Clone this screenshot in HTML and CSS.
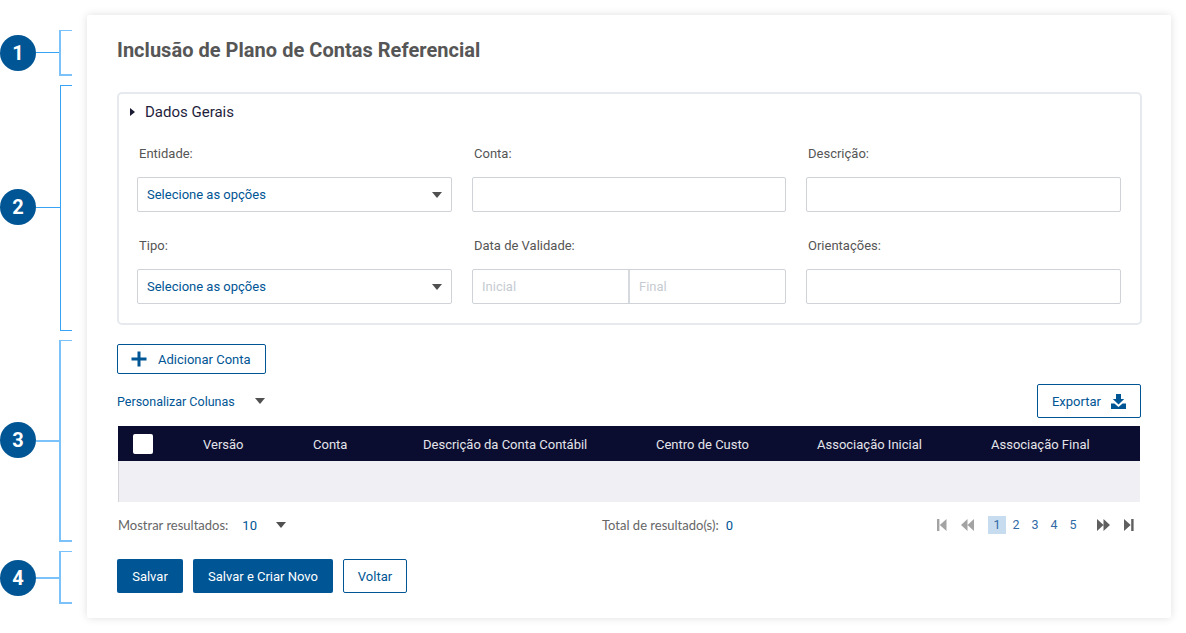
FILE: index.html
```html
<!DOCTYPE html>
<html lang="pt-BR">
<head>
<meta charset="utf-8">
<title>Inclusão de Plano de Contas Referencial</title>
<link rel="stylesheet" href="styles.css">
</head>
<body>
<div class="page">
  <div class="note note-1"><span class="badge">1</span><span class="stem"></span><span class="bracket"></span></div>
  <div class="note note-2"><span class="badge">2</span><span class="stem"></span><span class="bracket"></span></div>
  <div class="note note-3"><span class="badge">3</span><span class="stem"></span><span class="bracket"></span></div>
  <div class="note note-4"><span class="badge">4</span><span class="stem"></span><span class="bracket"></span></div>

  <main class="card">
    <h1 class="title">Inclusão de Plano de Contas Referencial</h1>

    <section class="panel">
      <div class="panel-head"><span class="caret-right"></span><span>Dados Gerais</span></div>
      <div class="form-grid">
        <div class="field">
          <label class="label">Entidade:</label>
          <div class="control select"><span>Selecione as opções</span><span class="caret-down"></span></div>
        </div>
        <div class="field">
          <label class="label">Conta:</label>
          <div class="control"></div>
        </div>
        <div class="field">
          <label class="label">Descrição:</label>
          <div class="control"></div>
        </div>
        <div class="field">
          <label class="label">Tipo:</label>
          <div class="control select"><span>Selecione as opções</span><span class="caret-down"></span></div>
        </div>
        <div class="field">
          <label class="label">Data de Validade:</label>
          <div class="control dates"><span class="date">Inicial</span><span class="date date-end">Final</span></div>
        </div>
        <div class="field">
          <label class="label">Orientações:</label>
          <div class="control"></div>
        </div>
      </div>
    </section>

    <button class="btn btn-outline btn-add">
      <svg class="icon-plus" width="16" height="16" viewBox="0 0 16 16"><path d="M6.5 0.5h3v6h6v3h-6v6h-3v-6h-6v-3h6z" fill="#005594"/></svg>
      <span>Adicionar Conta</span>
    </button>

    <div class="tools">
      <div class="customize"><span>Personalizar Colunas</span><span class="caret-down"></span></div>
      <button class="btn btn-outline btn-export">
        <span>Exportar</span>
        <svg width="15" height="15" viewBox="0 0 15 15"><path d="M5 0h5v5h3.2L7.5 10.6 1.8 5H5z M0 9.6h3.4L7.5 13l4.1-3.4H15V15H0z" fill="#005594"/></svg>
      </button>
    </div>

    <div class="table">
      <div class="thead">
        <span class="check-cell"><span class="check"></span></span>
        <span class="col col-version">Versão</span>
        <span class="col col-account">Conta</span>
        <span class="col col-desc">Descrição da Conta Contábil</span>
        <span class="col col-cost">Centro de Custo</span>
        <span class="col col-start">Associação Inicial</span>
        <span class="col">Associação Final</span>
      </div>
      <div class="tbody"></div>
    </div>

    <div class="pager-row">
      <div class="show"><span class="muted">Mostrar resultados:</span><span class="link show-value">10</span><span class="caret-down"></span></div>
      <div class="total"><span class="muted">Total de resultado(s):</span><span class="link">0</span></div>
      <nav class="pager">
        <svg class="pg-edge-l" width="10" height="12" viewBox="0 0 10 12"><path d="M0 0h2.4v12H0z M9.5 0v12L2.8 6z" fill="#a3a3a3"/></svg>
        <svg class="pg-prev" width="13" height="12" viewBox="0 0 13 12"><path d="M6.5 0v12L0 6z M13 0v12L6.5 6z" fill="#a3a3a3"/></svg>
        <span class="pg pg-current">1</span>
        <span class="pg">2</span>
        <span class="pg">3</span>
        <span class="pg">4</span>
        <span class="pg">5</span>
        <svg class="pg-next" width="13" height="12" viewBox="0 0 13 12"><path d="M0 0v12l6.5-6z M6.5 0v12L13 6z" fill="#5f5f5f"/></svg>
        <svg class="pg-edge-r" width="10" height="12" viewBox="0 0 10 12"><path d="M0 0v12l6.7-6z M7.2 0h2.4v12H7.2z" fill="#5f5f5f"/></svg>
      </nav>
    </div>

    <div class="actions">
      <button class="btn btn-solid btn-save">Salvar</button>
      <button class="btn btn-solid btn-save-new">Salvar e Criar Novo</button>
      <button class="btn btn-outline btn-back">Voltar</button>
    </div>
  </main>
</div>
</body>
</html>
```
FILE: styles.css
```css
* { box-sizing: border-box; }
html, body { margin: 0; padding: 0; }
body {
  background: #fff;
  font-family: Roboto, "Liberation Sans", sans-serif;
  color: #555;
  font-size: 13px;
}
.page {
  position: relative;
  width: 1186px;
  height: 633px;
  padding: 15px 15px 15px 87px;
  overflow: hidden;
}

/* Annotations */
.note { position: absolute; left: 0; }
.note-1 { top: 30px; height: 46px; }
.note-2 { top: 85px; height: 246px; }
.note-3 { top: 340px; height: 202px; }
.note-4 { top: 551px; height: 53px; }
.badge {
  position: absolute;
  left: 0;
  top: 50%;
  width: 36px;
  height: 36px;
  margin-top: -18px;
  border-radius: 50%;
  background: #005594;
  color: #fff;
  font-size: 20px;
  font-weight: 700;
  line-height: 36px;
  text-align: center;
}
.note-2 .badge, .note-3 .badge { margin-top: -19px; }
.stem {
  position: absolute;
  left: 36px;
  top: 50%;
  width: 24px;
  height: 1px;
  margin-top: -1px;
  background: #36a3f7;
}
.note-3 .stem, .note-4 .stem { height: 2px; background: #7cc2fa; }
.bracket {
  position: absolute;
  left: 60px;
  top: 0;
  width: 12px;
  height: 100%;
  border: 1px solid #36a3f7;
  border-right: 0;
}
.note-1 .bracket, .note-3 .bracket, .note-4 .bracket {
  left: 59px;
  width: 13px;
  border-color: #7cc2fa;
  border-width: 1px 0 2px 2px;
}

/* Card */
.card {
  height: 603px;
  background: #fff;
  border-radius: 2px;
  box-shadow: 0 0 8px rgba(0, 0, 0, 0.13);
  padding: 0 30px;
}
.title {
  margin: 0;
  padding-top: 23px;
  height: 77px;
  font-size: 20px;
  line-height: 24px;
  font-weight: 700;
  color: #565656;
  letter-spacing: 0.03px;
}

/* Panel */
.panel {
  height: 233px;
  margin-right: -1px;
  border: 2px solid #e6e9ed;
  border-radius: 5px;
  padding: 0 18px;
}
.panel-head {
  display: flex;
  align-items: center;
  height: 36px;
  margin-left: -7px;
  font-size: 15px;
  color: #1e1e3c;
}
.caret-right {
  width: 0;
  height: 0;
  margin-right: 10px;
  border-style: solid;
  border-width: 4px 0 4px 5px;
  border-color: transparent transparent transparent #1a1a35;
}
.form-grid {
  display: grid;
  grid-template-columns: 315px 314px 315px;
  column-gap: 20px;
  row-gap: 18px;
  padding-top: 8px;
}
.field { display: flex; flex-direction: column; }
.label {
  height: 39px;
  padding: 6px 0 0 2px;
  font-size: 13px;
  line-height: 20px;
  color: #555;
}
.control {
  height: 35px;
  border: 1px solid #cfd3d8;
  border-radius: 2px;
  background: #fff;
}
.select {
  display: flex;
  align-items: center;
  justify-content: space-between;
  padding: 0 9px;
  font-size: 13px;
  color: #005594;
}
.caret-down {
  width: 0;
  height: 0;
  border-style: solid;
  border-width: 6px 5.5px 0 5.5px;
  border-color: #505050 transparent transparent transparent;
}
.dates { display: flex; }
.date {
  flex: 1;
  padding-left: 9px;
  line-height: 33px;
  font-size: 13px;
  color: #c6cbd1;
}
.date-end { border-left: 2px solid #d6d9dd; padding-left: 9px; }

/* Buttons */
.btn {
  display: inline-flex;
  align-items: center;
  justify-content: center;
  border-radius: 2px;
  font-family: inherit;
  font-size: 13px;
  padding: 0;
}
.btn-outline { background: #fff; border: 1px solid #005594; color: #005594; }
.btn-solid { background: #005594; border: 0; color: #fff; }
.btn-add {
  display: flex;
  justify-content: flex-start;
  margin-top: 19px;
  width: 149px;
  height: 30px;
  padding-left: 13px;
  gap: 11px;
}
.tools {
  display: flex;
  align-items: flex-end;
  justify-content: space-between;
  height: 34px;
  margin-top: 10px;
}
.customize {
  display: flex;
  align-items: center;
  height: 34px;
  color: #005594;
  font-size: 12.5px;
  gap: 20px;
}
.btn-export {
  width: 104px;
  height: 34px;
  gap: 10px;
}

/* Table */
.table { margin-top: 8px; padding: 0 1px; }
.thead {
  display: flex;
  align-items: center;
  height: 35px;
  background: #0a0c30;
  color: #e4e4ea;
  font-size: 13px;
}
.check-cell { width: 85px; padding-left: 15px; display: flex; }
.check {
  width: 20px;
  height: 20px;
  background: #fff;
  border-radius: 2px;
}
.col { display: block; padding-top: 2px; }
.col-version { width: 110px; }
.col-account { width: 110px; }
.col-desc { width: 233px; }
.col-cost { width: 161px; }
.col-start { width: 174px; }
.tbody {
  height: 41px;
  background: #efeff4;
  border-left: 1px solid #d4d4d8;
}

/* Pager row */
.pager-row {
  display: flex;
  align-items: center;
  height: 24px;
  margin-top: 11px;
  font-family: Lato, Roboto, sans-serif;
  font-size: 13px;
}
.muted { color: #666; }
.link { color: #005594; font-family: Roboto, sans-serif; font-size: 13px; }
.show {
  display: flex;
  align-items: center;
  width: 485px;
  padding-left: 1px;
}
.show-value { margin-left: 14px; }
.show .caret-down { margin-left: 19px; }
.total { display: flex; align-items: center; gap: 7px; width: 335px; }
.pager {
  display: flex;
  align-items: center;
  font-family: Roboto, sans-serif;
  font-size: 12.5px;
  color: #2f6aa5;
}
.pg {
  width: 18px;
  height: 18px;
  line-height: 18px;
  margin-right: 1px;
  text-align: center;
}
.pg-current { background: #c8dcef; }
.pg-edge-l { margin-right: 14px; }
.pg-prev { margin-right: 14px; }
.pg-next { margin-left: 14px; margin-right: 14px; }

/* Actions */
.actions {
  display: flex;
  gap: 10px;
  margin-top: 22px;
}
.btn-save { width: 66px; height: 34px; }
.btn-save-new { width: 140px; height: 34px; }
.btn-back { width: 64px; height: 34px; }
```
